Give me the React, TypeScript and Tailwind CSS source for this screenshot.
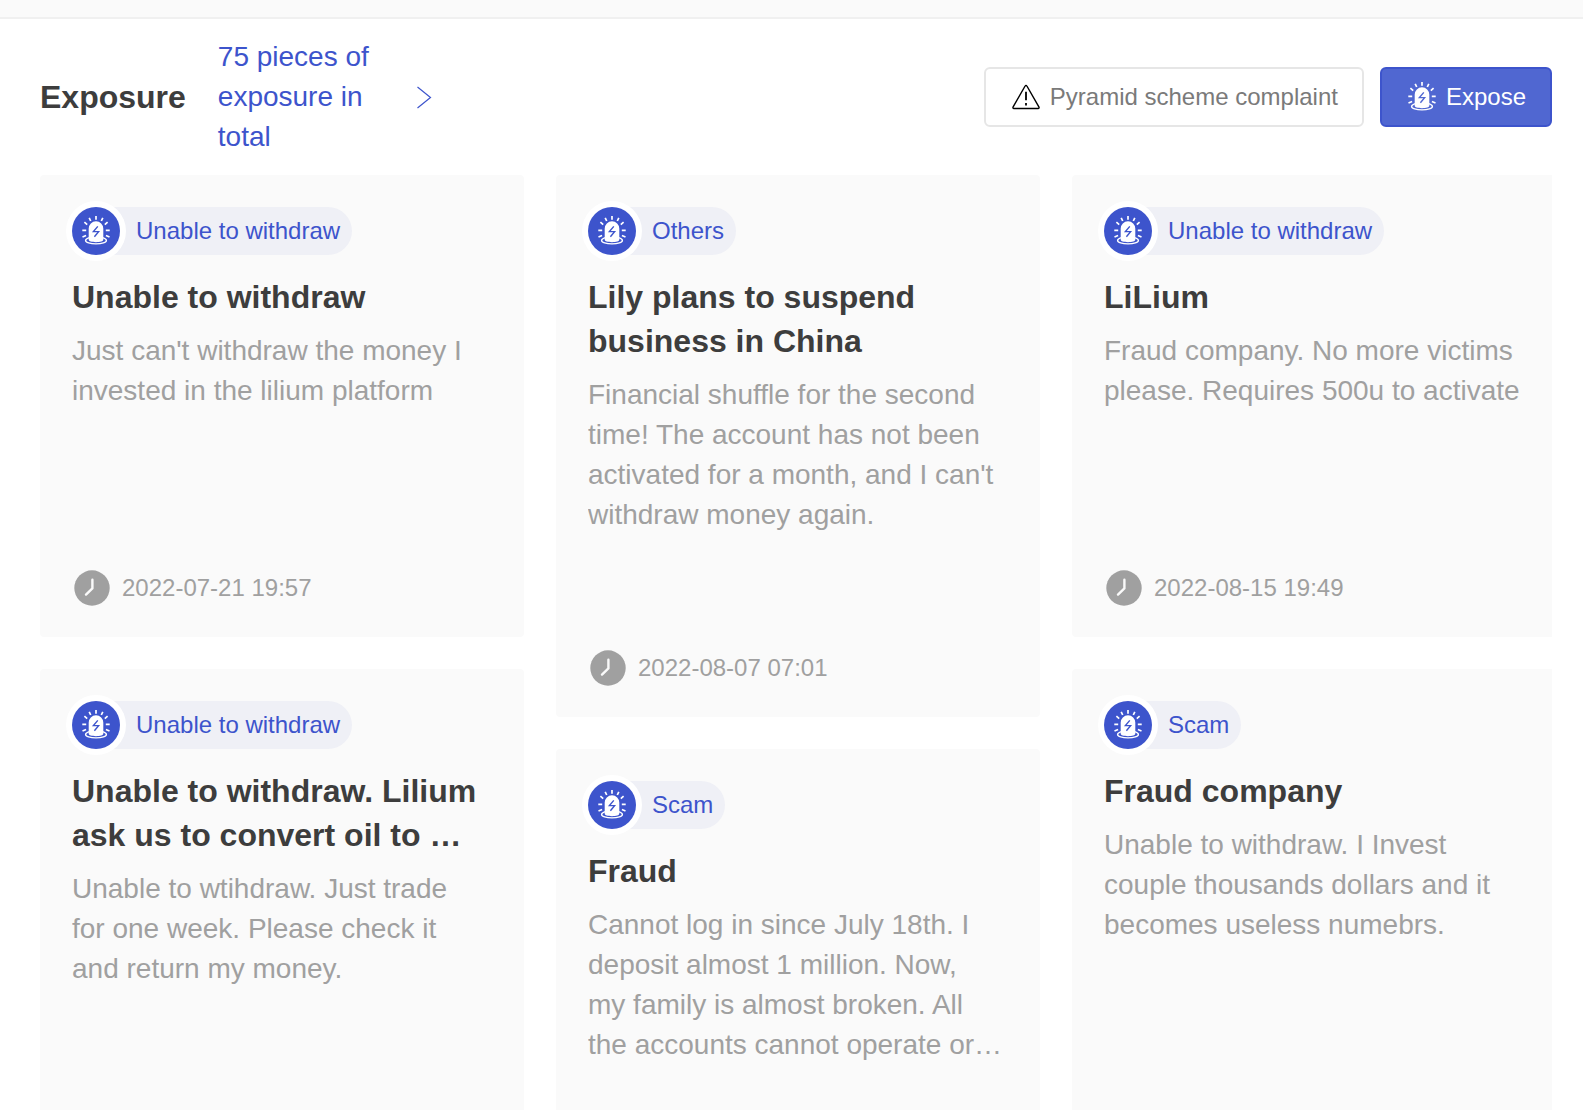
import clsx from 'clsx';

type Exposure = {
  id: number;
  tag: string;
  title: string;
  description: string;
  date: string;
  lines: 2 | 3 | 4;
};

const columns: Exposure[][] = [
  [
    {
      id: 1,
      tag: 'Unable to withdraw',
      title: 'Unable to withdraw',
      description: "Just can't withdraw the money I invested in the lilium platform",
      date: '2022-07-21 19:57',
      lines: 2,
    },
    {
      id: 2,
      tag: 'Unable to withdraw',
      title: 'Unable to withdraw. Lilium ask us to convert oil to …',
      description: 'Unable to wtihdraw. Just trade\nfor one week. Please check it\nand return my money.',
      date: '',
      lines: 3,
    },
  ],
  [
    {
      id: 3,
      tag: 'Others',
      title: 'Lily plans to suspend business in China',
      description:
        "Financial shuffle for the second time! The account has not been activated for a month, and I can't withdraw money again.",
      date: '2022-08-07 07:01',
      lines: 4,
    },
    {
      id: 4,
      tag: 'Scam',
      title: 'Fraud',
      description:
        'Cannot log in since July 18th. I deposit almost 1 million. Now,\nmy family is almost broken. All\nthe accounts cannot operate or…',
      date: '',
      lines: 4,
    },
  ],
  [
    {
      id: 5,
      tag: 'Unable to withdraw',
      title: 'LiLium',
      description: 'Fraud company. No more victims please. Requires 500u to activate',
      date: '2022-08-15 19:49',
      lines: 2,
    },
    {
      id: 6,
      tag: 'Scam',
      title: 'Fraud company',
      description: 'Unable to withdraw. I Invest couple thousands dollars and it becomes useless numebrs.',
      date: '',
      lines: 3,
    },
  ],
];

function SirenIcon({ boltClass }: { boltClass: string }) {
  return (
    <svg viewBox="0 0 32 32" className="size-8 shrink-0" fill="none" aria-hidden="true">
      <path
        d="M16 1v3.8M9.2 2.8l1.5 3.2M22.8 2.8l-1.5 3.2M4.4 7.2l2.8 2.5M27.6 7.2l-2.8 2.5M2.3 15.4h3.9M29.7 15.4h-3.9M2.5 22l3.6-1.5M29.5 22l-3.6-1.5"
        stroke="white"
        strokeWidth="1.7"
      />
      <ellipse cx="16" cy="25.4" rx="10.4" ry="3.5" stroke="white" strokeWidth="1.4" />
      <path d="M8.7 13.6a7.3 7.3 0 0 1 14.6 0v11.2c0 1.4-3.2 2.4-7.3 2.4s-7.3-1-7.3-2.4z" fill="white" />
      <path d="M17.8 11.4l-4.4 5.2h5.2l-4.2 5.2" strokeWidth="1.4" className={boltClass} />
    </svg>
  );
}

function WarningIcon() {
  return (
    <svg viewBox="0 0 32 32" className="size-8 shrink-0" fill="none" stroke="black" aria-hidden="true">
      <path d="M15.1 5a1 1 0 0 1 1.8 0L29 26.2a.9.9 0 0 1-.8 1.3H3.8a.9.9 0 0 1-.8-1.3z" strokeWidth="1.4" />
      <path d="M16 10.8v8.4M16 22v2.6" strokeWidth="1.8" />
    </svg>
  );
}

function ClockIcon() {
  return (
    <svg viewBox="0 0 40 40" className="size-10 shrink-0" fill="none" aria-hidden="true">
      <circle cx="20" cy="20" r="17.7" fill="#a0a0a0" />
      <path d="M20.4 11.8v8.6L14 26.6" stroke="#fafafa" strokeWidth="2.4" strokeLinecap="round" strokeLinejoin="round" />
    </svg>
  );
}

function ExposureCard({ item }: { item: Exposure }) {
  return (
    <article
      className={clsx(
        'flex flex-col rounded bg-[#fafafa] p-8',
        item.lines === 2 && 'min-h-[462px]',
        item.lines === 3 && 'min-h-[502px]',
        item.lines === 4 && 'min-h-[542px]',
      )}
    >
      <div className="flex h-12 items-center self-start rounded-full bg-[#eff0f6] pr-3 text-2xl text-[#3d54cc]">
        <span className="mr-4 flex size-12 items-center justify-center rounded-full bg-[#3d54cc] ring-6 ring-white">
          <SirenIcon boltClass="stroke-[#3d54cc]" />
        </span>
        {item.tag}
      </div>
      <h3 className="mt-5 line-clamp-2 text-[32px] leading-[44px] font-bold text-[#3d3d3d]">{item.title}</h3>
      <p className="mt-3 line-clamp-4 text-[28px] leading-10 whitespace-pre-line text-[#a0a0a0]">{item.description}</p>
      {item.date && (
        <div className="mt-auto flex h-[34px] items-center gap-[10px] text-2xl text-[#a0a0a0]">
          <ClockIcon />
          <time>{item.date}</time>
        </div>
      )}
    </article>
  );
}

export default function App() {
  return (
    <div className="max-h-screen overflow-hidden bg-white font-['Liberation_Sans',Arial,sans-serif]">
      <div className="h-[19px] border-b-2 border-[#f0f0f0] bg-[#fafafa]" />
      <section className="pt-[18px] pr-[31px] pl-10">
        <header className="flex items-center">
          <h2 className="text-[32px] leading-[44px] font-bold text-[#3d3d3d]">Exposure</h2>
          <a href="#exposure" className="ml-8 flex items-center text-[28px] leading-10 text-[#3d54cc]">
            <span className="w-[190px]">75 pieces of exposure in total</span>
            <svg viewBox="0 0 32 32" className="size-8" fill="none" stroke="currentColor" strokeWidth="1.2" aria-hidden="true">
              <path d="M9.5 6L22.5 16.5L9.5 27" />
            </svg>
          </a>
          <div className="ml-auto flex gap-4 text-2xl">
            <button
              type="button"
              className="flex h-[60px] items-center gap-2 rounded-md border-2 border-[#e6e6e6] bg-white px-6 text-[#7a7a7a]"
            >
              <WarningIcon />
              Pyramid scheme complaint
            </button>
            <button
              type="button"
              className="flex h-[60px] items-center gap-2 rounded-md border-2 border-[#3d54cc] bg-[#5067d1] px-6 text-white"
            >
              <SirenIcon boltClass="stroke-[#5067d1]" />
              Expose
            </button>
          </div>
        </header>
        {/* the last column runs slightly past the section and gets clipped */}
        <div className="mt-[18px] overflow-hidden">
          <div className="-mr-1 grid grid-cols-3 items-start gap-8">
            {columns.map((items) => (
              <div key={items[0].id} className="flex flex-col gap-8">
                {items.map((item) => (
                  <ExposureCard key={item.id} item={item} />
                ))}
              </div>
            ))}
          </div>
        </div>
      </section>
    </div>
  );
}
